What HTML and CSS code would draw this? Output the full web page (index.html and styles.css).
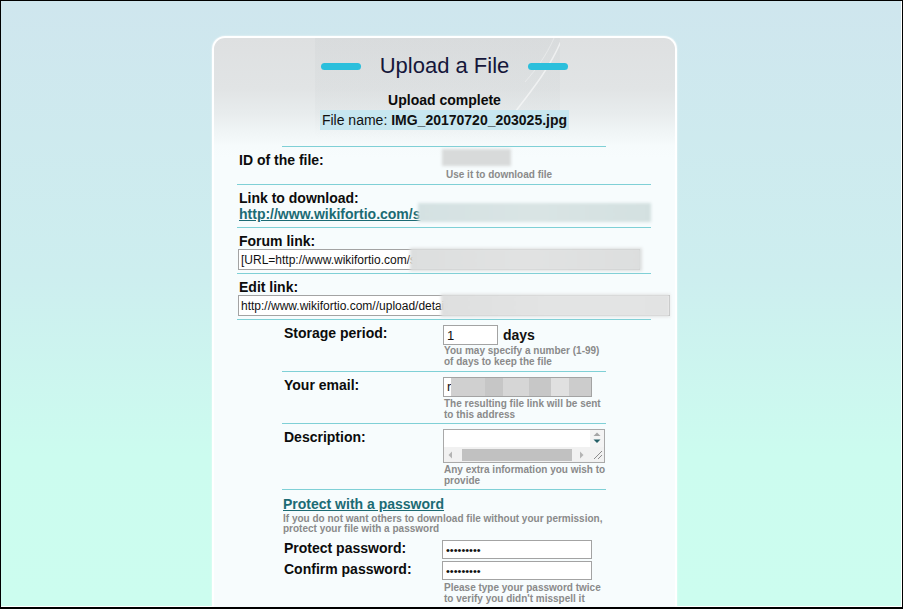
FILE: index.html
```html
<!DOCTYPE html>
<html lang="en">
<head>
<meta charset="utf-8">
<title>Upload a File</title>
<link rel="stylesheet" href="styles.css">
</head>
<body>
<div class="frame">
  <div class="card">
    <div class="deco">
      <svg width="245" height="100" viewBox="0 0 245 100"><path d="M248 -2 C 236 30, 214 56, 186 92" fill="none" stroke="#ffffff" stroke-opacity="0.55" stroke-width="1.5"/><path d="M240 -2 C 230 20, 222 30, 210 44" fill="none" stroke="#ffffff" stroke-opacity="0.35" stroke-width="1"/></svg>
    </div>
    <header class="head">
      <div class="title-row"><span class="pill"></span><h1 class="title">Upload a File</h1><span class="pill"></span></div>
      <div class="status">Upload complete</div>
      <div class="fname-wrap"><span class="fname">File name: <b>IMG_20170720_203025.jpg</b></span></div>
      <div class="topline"></div>
    </header>

    <div class="wide">
      <div class="row r-id">
        <div class="lbl">ID of the file:</div>
        <div class="val">
          <div class="blur blur-id"></div>
          <div class="help help-id">Use it to download file</div>
        </div>
      </div>
      <div class="row r-link">
        <div class="lbl">Link to download:</div>
        <div class="linkline"><a class="dl" href="#">http://www.wikifortio.com/s</a><span class="blur blur-link"></span></div>
      </div>
      <div class="row r-field">
        <div class="lbl">Forum link:</div>
        <div class="fieldwrap"><input class="txt txt-forum" type="text" value="[URL=http://www.wikifortio.com/s" readonly><span class="blur blur-forum"></span></div>
      </div>
      <div class="row r-field">
        <div class="lbl">Edit link:</div>
        <div class="fieldwrap"><input class="txt txt-edit" type="text" value="http://www.wikifortio.com//upload/details" readonly><span class="blur blur-edit"></span></div>
      </div>
    </div>

    <div class="narrow">
      <div class="nrow r-storage">
        <div class="lbl">Storage period:</div>
        <div class="val">
          <div class="inline"><input class="txt txt-days" type="text" value="1"><span class="days">days</span></div>
          <div class="help">You may specify a number (1-99)<br>of days to keep the file</div>
        </div>
      </div>
      <div class="nrow r-email">
        <div class="lbl">Your email:</div>
        <div class="val">
          <div class="fieldwrap"><div class="txt txt-email">r</div><span class="email-mask"></span></div>
          <div class="help help-gap">The resulting file link will be sent<br>to this address</div>
        </div>
      </div>
      <div class="nrow r-desc">
        <div class="lbl">Description:</div>
        <div class="val">
          <div class="ta">
            <div class="ta-area"></div>
            <div class="ta-v">
              <svg width="14" height="17" viewBox="0 0 14 17"><path d="M3.5 6 L7 2.5 L10.5 6 Z" fill="#a6a6a6"/><path d="M3.5 9.5 L10.5 9.5 L7 13 Z" fill="#245f66"/></svg>
            </div>
            <div class="ta-h">
              <svg class="arr" width="8" height="14" viewBox="0 0 8 14"><path d="M6 3.5 L2.5 7 L6 10.5 Z" fill="#b4b4b4"/></svg>
              <span class="thumb"></span>
              <svg class="arr" width="8" height="14" viewBox="0 0 8 14"><path d="M2 3.5 L5.5 7 L2 10.5 Z" fill="#b4b4b4"/></svg>
            </div>
            <div class="ta-c">
              <svg width="14" height="14" viewBox="0 0 14 14"><path d="M4 12 L12 4 M8 12 L12 8" stroke="#8c8c8c" stroke-width="1"/></svg>
            </div>
          </div>
          <div class="help help-gap">Any extra information you wish to<br>provide</div>
        </div>
      </div>

      <div class="protect">
        <a class="plink" href="#">Protect with a password</a>
        <div class="help help-p">If you do not want others to download file without your permission,<br>protect your file with a password</div>
        <div class="pw">
          <div class="pw-row"><span class="pw-lbl">Protect password:</span><input class="txt txt-pw" type="password" value="123456789"></div>
          <div class="pw-row"><span class="pw-lbl">Confirm password:</span><input class="txt txt-pw" type="password" value="123456789"></div>
        </div>
        <div class="help help-pw">Please type your password twice<br>to verify you didn't misspell it</div>
      </div>
    </div>
  </div>
</div>
</body>
</html>
```

FILE: styles.css
```css
* { box-sizing: border-box; }
html, body { margin: 0; padding: 0; }
body { font-family: "Liberation Sans", Arial, sans-serif; color: #111; }

.frame {
  width: 903px;
  height: 609px;
  border: 1px solid #000;
  border-bottom-width: 2px;
  background: linear-gradient(to bottom, #cfe6ee 0%, #cdeeef 45%, #ccfcef 75%, #ccfdef 100%);
  box-shadow: inset -1px -1px 0 #fff;
  overflow: hidden;
}

.card {
  position: relative;
  margin: 35px 0 0 211px;
  width: 465px;
  height: 620px;
  border: 2px solid #fff;
  border-bottom: 0;
  border-radius: 13px 13px 0 0;
  background: linear-gradient(to bottom, #dee0e1 0px, #e1e4e5 50px, #e8eced 75px, #eff4f5 92px, #f6fbfc 108px, #f7fcfd 120px);
  box-shadow: 0 0 2px rgba(255,255,255,0.8);
}

.deco {
  position: absolute;
  left: 101px;
  top: 0;
  width: 245px;
  height: 100px;
  background: linear-gradient(to bottom, rgba(150,160,165,0.07), rgba(150,160,165,0.05) 70%, rgba(150,160,165,0));
}
.deco svg { display: block; }

.head { position: relative; padding-top: 13px; }

.title-row {
  display: flex;
  justify-content: center;
  align-items: center;
  gap: 19px;
  height: 30px;
}
.pill {
  width: 40px;
  height: 7px;
  border-radius: 4px;
  background: #2bbfdc;
}
.title {
  margin: 0;
  font-weight: normal;
  font-size: 22px;
  line-height: 30px;
  color: #15163a;
}

.status {
  margin-top: 10px;
  text-align: center;
  font-weight: bold;
  font-size: 14px;
  line-height: 18px;
  color: #0b0b0b;
}
.fname-wrap {
  margin-top: 1px;
  text-align: center;
  height: 20px;
}
.fname {
  display: inline-block;
  padding: 0 2px;
  font-size: 14px;
  line-height: 20px;
  background: #c7e7f0;
  color: #111;
}
.topline {
  margin: 16px 0 0 68px;
  width: 324px;
  height: 1px;
  background: #7fd0d6;
}

.lbl {
  font-weight: bold;
  font-size: 14px;
  line-height: 16px;
  padding-left: 2px;
  color: #0c0c0c;
}
.help {
  font-weight: bold;
  font-size: 10px;
  line-height: 11px;
  color: #8a8a8a;
}

.blur {
  display: block;
  filter: blur(1.6px);
}

/* wide section */
.wide { margin-left: 23px; width: 414px; }
.row { border-bottom: 1px solid #7fd0d6; }

.r-id {
  height: 38px;
  display: grid;
  grid-template-columns: 205px 1fr;
}
.r-id .lbl { margin-top: 5px; }
.r-id .val { padding-top: 2px; }
.blur-id { width: 69px; height: 17px; background: #d8dada; }
.help-id { margin: 3px 0 0 4px; }

.r-link { height: 43px; padding-top: 5px; }
.linkline { position: relative; line-height: 16px; height: 16px; padding-left: 2px; }
.dl {
  font-weight: bold;
  font-size: 14px;
  color: #1c6b74;
  text-decoration: underline;
}
.blur-link {
  position: absolute;
  left: 181px;
  top: -3px;
  width: 233px;
  height: 19px;
  background: linear-gradient(to right, #d4e1e2, #d9e4e4 50%, #d3e0e0);
}

.r-field { height: 46px; padding-top: 5px; }
.fieldwrap { position: relative; }
.txt {
  display: block;
  margin: 0;
  border: 1px solid #a3a3a3;
  background: #fff;
  font-family: "Liberation Sans", Arial, sans-serif;
  font-size: 12px;
  color: #111;
  padding: 0 2px;
  outline: none;
}
.txt-forum { margin-left: 1px; width: 402px; height: 21px; }
.txt-edit { margin-left: 1px; width: 432px; height: 21px; }
.blur-forum {
  position: absolute;
  left: 173px;
  top: -1px;
  width: 232px;
  height: 23px;
  background: linear-gradient(to right, #dcdede, #e1e2e2 50%, #dcdede);
}
.blur-edit {
  position: absolute;
  left: 204px;
  top: -1px;
  width: 229px;
  height: 23px;
  background: linear-gradient(to right, #dedfdf, #e3e4e4 50%, #e2e3e3);
}

/* narrow section */
.narrow { margin-left: 68px; width: 324px; }
.nrow {
  display: grid;
  grid-template-columns: 161px 1fr;
  border-bottom: 1px solid #7fd0d6;
  padding-top: 5px;
}
.r-storage, .r-email { height: 52px; }
.r-desc { height: 66px; }

.inline { display: flex; align-items: center; height: 20px; }
.txt-days { width: 55px; height: 20px; font-size: 13px; padding-left: 3px; }
.days { margin-left: 5px; font-weight: bold; font-size: 14px; color: #111; }
.r-storage .help { margin-left: 1px; }
.help-gap { margin: 1px 0 0 1px; }

.txt-email { width: 149px; height: 20px; font-size: 13px; line-height: 18px; padding-left: 3px; }
.email-mask {
  position: absolute;
  left: 8px;
  top: 1px;
  width: 140px;
  height: 18px;
  background: linear-gradient(to right,
    #d0d0d0 0, #d0d0d0 34px,
    #c6c6c6 34px, #c6c6c6 52px,
    #d6d6d6 52px, #d6d6d6 78px,
    #c7c7c7 78px, #c7c7c7 100px,
    #e0e0e0 100px, #e0e0e0 118px,
    #cccccc 118px, #cccccc 140px);
}

.ta {
  width: 162px;
  height: 34px;
  border: 1px solid #a9a9a9;
  background: #fff;
  display: grid;
  grid-template-columns: 1fr 14px;
  grid-template-rows: 17px 15px;
}
.ta-area { background: #fff; }
.ta-v { background: #f4f4f4; }
.ta-v svg, .ta-c svg { display: block; }
.ta-h {
  background: #f1f1f1;
  display: flex;
  align-items: center;
  padding-left: 2px;
}
.ta-h .arr { display: block; }
.thumb {
  display: block;
  margin: 0 6px 0 8px;
  width: 110px;
  height: 12px;
  background: #c1c1c1;
}
.ta-c { background: #f1f1f1; }

.protect { padding-top: 5px; }
.plink {
  display: inline-block;
  margin-left: 1px;
  font-weight: bold;
  font-size: 14px;
  line-height: 16px;
  color: #1c6b74;
  text-decoration: underline;
}
.help-p { margin: 1px 0 0 1px; line-height: 10px; }
.pw { margin-top: 6px; }
.pw-row {
  display: grid;
  grid-template-columns: 160px 150px;
  height: 21px;
}
.pw-lbl {
  font-weight: bold;
  font-size: 14px;
  line-height: 17px;
  padding-left: 2px;
  color: #0c0c0c;
}
.txt-pw { width: 150px; height: 19px; font-size: 11px; padding-left: 3px; }
.help-pw { margin-left: 162px; }
```
